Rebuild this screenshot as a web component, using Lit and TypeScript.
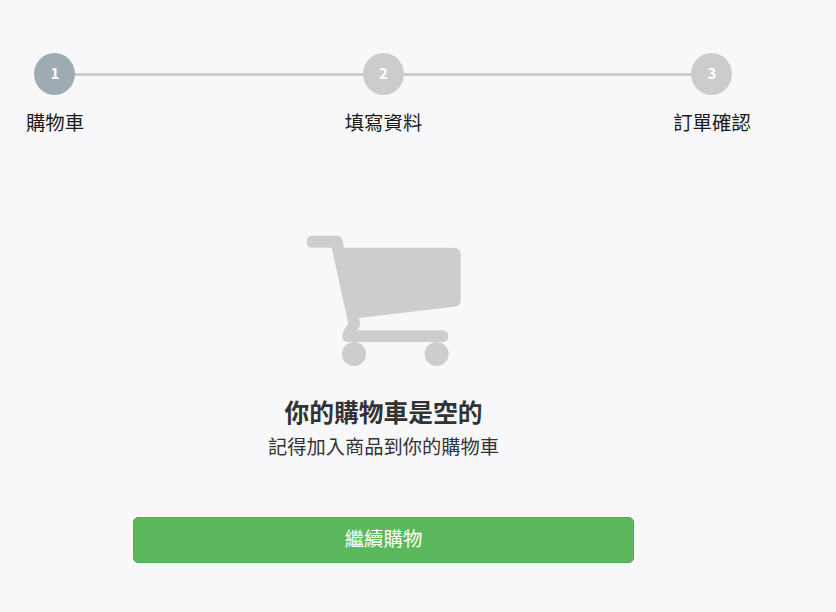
import { LitElement, html, css, svg } from "lit";
import { customElement } from "lit/decorators.js";

const STEPS = ["購物車", "填寫資料", "訂單確認"];

@customElement("app-root")
export class AppRoot extends LitElement {
  static styles = css`
    :host {
      display: block;
      min-height: 612px;
      background: #f8f8fb;
      font-family: "Noto Sans CJK TC", "Noto Sans", sans-serif;
      color: #333;
    }
    .page {
      width: 767px;
      padding-top: 53px;
      display: flex;
      flex-direction: column;
      align-items: center;
    }
    .steps {
      position: relative;
      align-self: stretch;
      display: flex;
      justify-content: space-between;
    }
    .line {
      position: absolute;
      left: 55px;
      right: 55px;
      top: 20px;
      height: 3px;
      background: #ccc;
    }
    .step {
      position: relative;
      width: 110px;
      display: flex;
      flex-direction: column;
      align-items: center;
    }
    .dot {
      box-sizing: border-box;
      width: 41px;
      height: 42px;
      margin-left: -1px;
      padding-left: 1px;
      border-radius: 50%;
      background: #ccc;
      color: #fff;
      font-weight: 700;
      font-size: 15px;
      line-height: 40px;
      text-align: center;
    }
    .dot.on {
      background: #9eabb3;
    }
    .label {
      margin-top: 13px;
      font-size: 19.4px;
      line-height: 28px;
      color: #1a1a1a;
    }
    .cart {
      display: block;
      margin: 89px 0 0 2px;
      width: 190px;
      height: 150px;
    }
    h2 {
      margin: 16px 0 0;
      font-size: 24.75px;
      line-height: 40px;
      font-weight: 700;
      color: #333;
    }
    p {
      margin: 1px 0 0;
      font-size: 19.25px;
      line-height: 28px;
      color: #333;
    }
    button {
      margin-top: 57px;
      width: 501px;
      height: 46px;
      padding: 0 0 5px;
      background: #5cb85c;
      border: 1px solid #4cae4c;
      border-radius: 5px;
      color: #fff;
      font-family: inherit;
      font-size: 19.4px;
    }
  `;

  render() {
    return html`
      <div class="page">
        <div class="steps">
          <div class="line"></div>
          ${STEPS.map(
            (s, i) => html`
              <div class="step">
                <div class="dot ${i === 0 ? "on" : ""}">${i + 1}</div>
                <div class="label">${s}</div>
              </div>
            `
          )}
        </div>
        <svg class="cart" viewBox="0 0 570 450" fill="#cdcdcd">
          ${svg`<path d="M68 32H140Q155 32 158 48L162 68H490Q512 68 512 90V225Q512 243 492 245L207 279L210 295Q210 310 200 316H455Q475 316 475 333Q475 351 455 351H175Q157 351 157 333Q157 320 175 296L125 68H68Q50 68 50 50Q50 32 68 32Z"/>
          <circle cx="192" cy="387" r="36"/>
          <circle cx="440" cy="387" r="36"/>`}
        </svg>
        <h2>你的購物車是空的</h2>
        <p>記得加入商品到你的購物車</p>
        <button>繼續購物</button>
      </div>
    `;
  }
}
